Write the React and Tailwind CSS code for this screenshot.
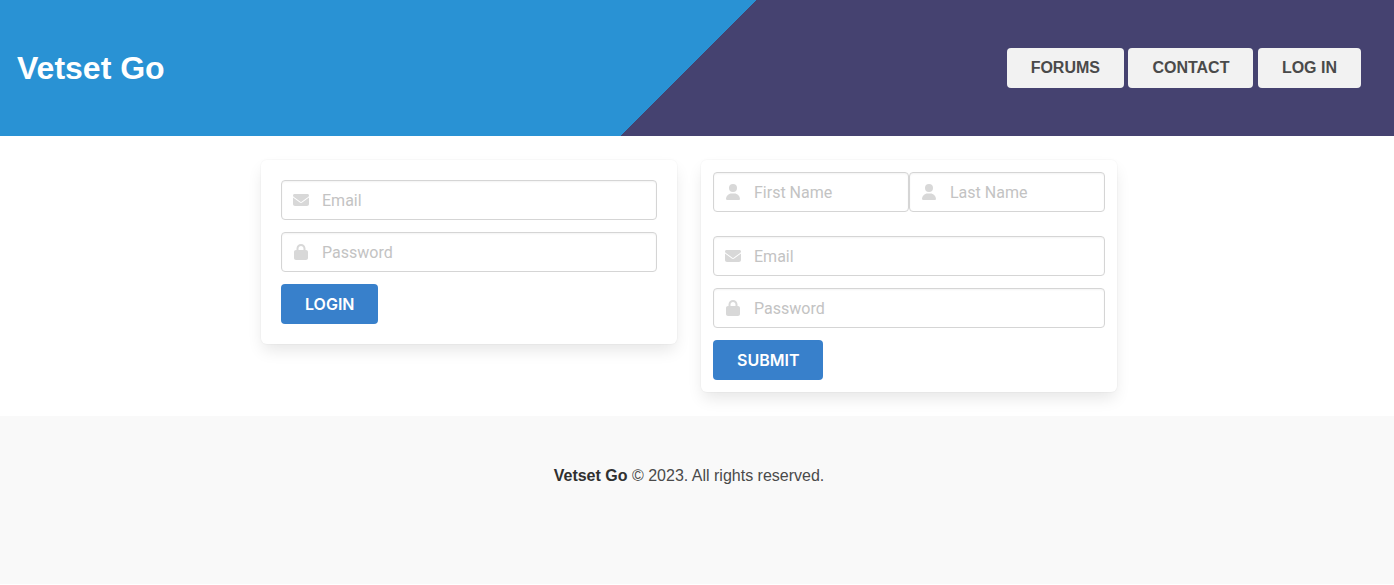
import React from "react";
import { FaEnvelope, FaLock, FaUser } from "react-icons/fa6";

const NAV_LINKS = ["Forums", "Contact", "Log in"];

function Field({ id, label, type = "text", icon: Icon, autoComplete }) {
  return (
    <label htmlFor={id} className="relative block min-w-0 flex-1">
      <input
        id={id}
        name={id}
        type={type}
        placeholder={label}
        aria-label={label}
        autoComplete={autoComplete}
        className="block h-10 w-full rounded border border-[#d5d5d5] bg-white pr-3 pl-10 font-[Roboto,sans-serif] text-base text-[#363636] shadow-[inset_0_1px_2px_rgba(10,10,10,0.05)] outline-none placeholder:text-[#c3c3c3] focus:border-[#485fc7]"
      />
      <span className="pointer-events-none absolute inset-y-0 left-0 flex w-10 items-center justify-center text-[#d8d8d8]">
        <Icon className="size-4" aria-hidden="true" />
      </span>
    </label>
  );
}

function SubmitButton({ children }) {
  return (
    <button
      type="submit"
      className="h-10 cursor-pointer self-start rounded bg-[#3880cb] px-6 font-[Inter,sans-serif] text-base font-semibold text-white uppercase hover:bg-[#3276bd]"
    >
      {children}
    </button>
  );
}

const CARD =
  "flex min-w-0 flex-col gap-3 rounded-md bg-white shadow-[0_8px_16px_-2px_rgba(10,10,10,0.1),0_0_0_1px_rgba(10,10,10,0.02)]";

export default function App() {
  const keepOnPage = (event) => event.preventDefault();

  return (
    <div className="font-['Liberation_Sans',Arial,sans-serif] text-base text-[#4a4a4a]">
      <header className="flex flex-wrap items-center justify-between gap-4 bg-[linear-gradient(135deg,#2992d4_calc(50%_-_6px),#454270_calc(50%_-_6px))] py-12 pr-[33px] pl-[17px]">
        <h1 className="text-[32px] leading-10 font-bold text-white">Vetset Go</h1>
        <nav aria-label="Main">
          {NAV_LINKS.map((name) => (
            <React.Fragment key={name}>
              <a
                href="#"
                className="inline-flex h-10 items-center rounded bg-[#f2f2f2] px-6 font-bold text-[#4a4a4a] uppercase hover:bg-white"
              >
                {name}
              </a>{" "}
            </React.Fragment>
          ))}
        </nav>
      </header>

      <main className="py-6 pr-4">
        <div className="mx-auto grid max-w-[856px] items-start gap-6 sm:grid-cols-2">
          <form onSubmit={keepOnPage} aria-label="Log in" className={`${CARD} p-5`}>
            <Field id="login-email" label="Email" type="email" icon={FaEnvelope} autoComplete="email" />
            <Field id="login-password" label="Password" type="password" icon={FaLock} autoComplete="current-password" />
            <SubmitButton>Login</SubmitButton>
          </form>

          <form onSubmit={keepOnPage} aria-label="Sign up" className={`${CARD} p-3`}>
            <div className="mb-3 flex">
              <Field id="first-name" label="First Name" icon={FaUser} autoComplete="given-name" />
              <Field id="last-name" label="Last Name" icon={FaUser} autoComplete="family-name" />
            </div>
            <Field id="signup-email" label="Email" type="email" icon={FaEnvelope} autoComplete="email" />
            <Field id="signup-password" label="Password" type="password" icon={FaLock} autoComplete="new-password" />
            <SubmitButton>Submit</SubmitButton>
          </form>
        </div>
      </main>

      <footer className="bg-[#f9f9f9] pt-12 pr-10 pb-24 pl-6 text-center">
        <p className="leading-6">
          <strong className="font-bold text-[#303030]">Vetset Go</strong> © 2023. All rights reserved.
        </p>
      </footer>
    </div>
  );
}
